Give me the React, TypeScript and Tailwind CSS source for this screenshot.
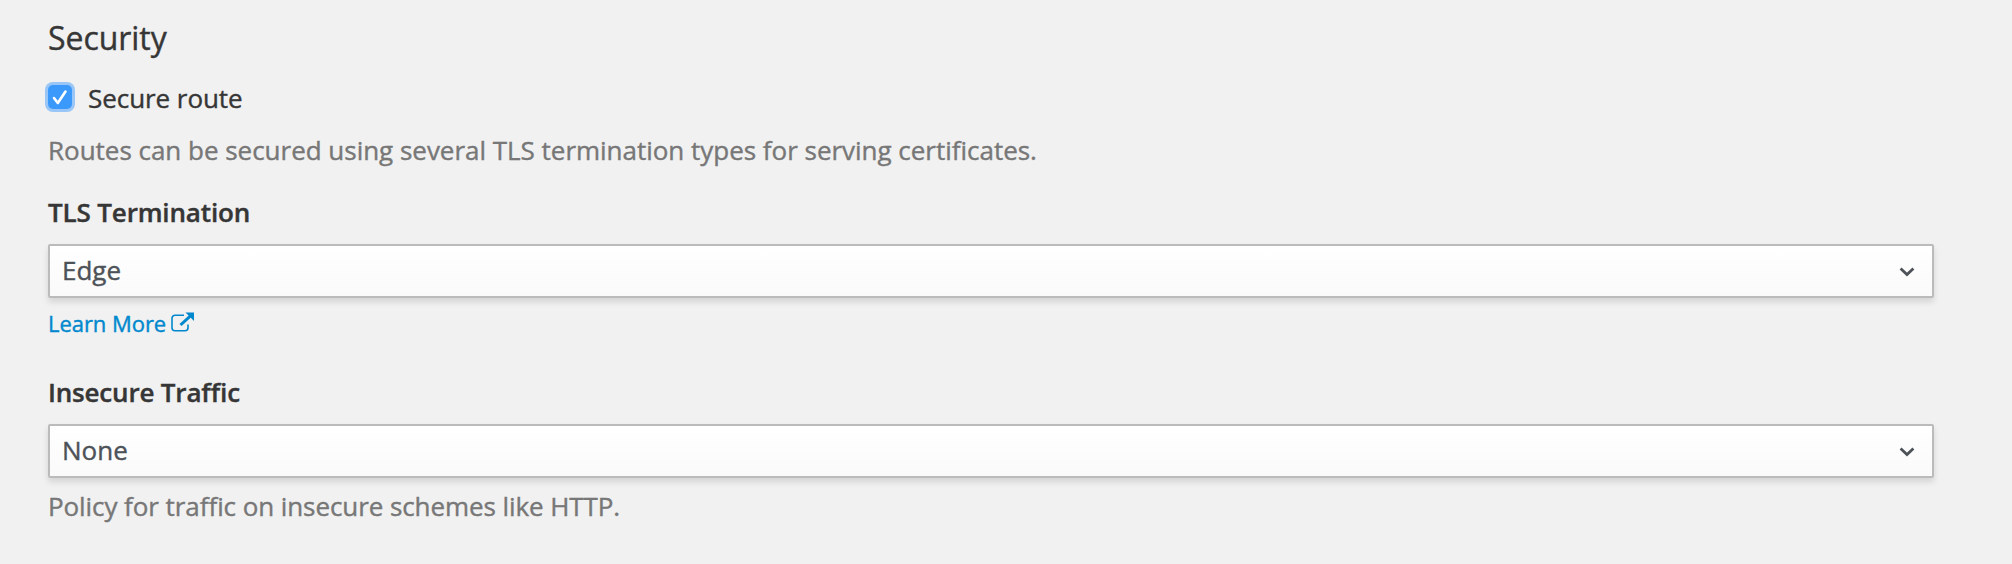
import React from "react";

function SelectBox({ value }: { value: string }) {
  return (
    <div className="mt-[14px] flex h-[54px] w-[1886px] items-center justify-between rounded-[2px] border-2 border-[#bbb] bg-linear-to-b from-white to-[#fafafa] pr-[17px] pl-3 text-[#4d5258] shadow-[0_4px_6px_rgba(3,3,3,0.12)]">
      <span className="-mt-0.5 leading-9">{value}</span>
      <svg className="mt-px h-[10px] w-4" viewBox="0 0 16 10" fill="none" stroke="#4d5258" strokeWidth="2.8">
        <path d="M1.6 1.6 8 7.6 14.4 1.6" />
      </svg>
    </div>
  );
}

export default function App() {
  return (
    <main className="flex h-[564px] w-[2012px] flex-col items-start bg-[#f1f1f1] pt-5 pl-12 font-['Open_Sans',sans-serif] text-[26px] leading-9 text-[#363636] [-webkit-text-stroke:0.4px] [font-feature-settings:'liga','kern']">
      <h2 className="text-[32px] leading-9 tracking-[-0.05px]">Security</h2>
      <label className="mt-6 flex h-9 items-center">
        <span className="-mt-[2px] flex size-6 items-center justify-center rounded-[5px] bg-[#3b99fc] shadow-[0_0_0_3px_#99c6f6]">
          <svg className="size-6" viewBox="0 0 24 24" fill="none" stroke="white" strokeWidth="2.6" strokeLinecap="round" strokeLinejoin="round">
            <path d="M6 13 9.8 18 17.5 6.5" />
          </svg>
        </span>
        <span className="ml-4 tracking-[-0.06px]">Secure route</span>
      </label>
      <p className="mt-4 tracking-[-0.02px] text-[#777]">Routes can be secured using several TLS termination types for serving certificates.</p>
      <div className="mt-[26px] tracking-[-0.15px] font-semibold">TLS Termination</div>
      <SelectBox value="Edge" />
      <a className="mt-[10px] flex h-[30px] items-center text-[22px] leading-[30px] tracking-[-0.05px] text-[#0088ce]" href="#">
        Learn More
        <svg className="ml-[3.5px] size-[24px]" viewBox="0 0 24 24" fill="none" stroke="#0088ce">
          <path d="M14 4.3H5a3 3 0 0 0-3 3v9.5a3 3 0 0 0 3 3h10a3 3 0 0 0 3-3V13.5" strokeWidth="1.6" />
          <path d="M10.5 14 20.5 4.8" strokeWidth="3" />
          <path d="M15.5 1.5H24V10z" fill="#0088ce" stroke="none" />
        </svg>
      </a>
      <div className="mt-9 tracking-[-0.18px] font-semibold">Insecure Traffic</div>
      <SelectBox value="None" />
      <p className="mt-[10px] tracking-[-0.08px] text-[#777]">Policy for traffic on insecure schemes like HTTP.</p>
    </main>
  );
}
